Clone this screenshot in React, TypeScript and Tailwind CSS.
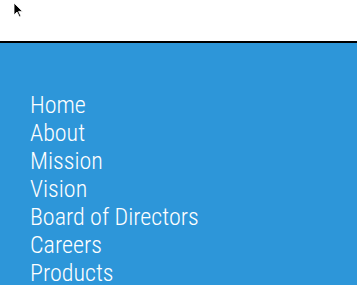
export default function App() {
  const links = ["Home", "About", "Mission", "Vision", "Board of Directors", "Careers", "Products"];
  return (
    <div className="h-[285px] w-[357px] overflow-hidden bg-white font-['Roboto',sans-serif]">
      <header className="relative h-[43px] border-b-2 border-black bg-white">
        <svg className="absolute left-[13px] top-[2px]" width="10" height="16" viewBox="0 0 10 16">
          <path d="M1 1 L1 13 L4 10 L6.5 15 L8 14.3 L5.6 9.4 L9.5 9.4 Z" fill="black" stroke="white" strokeWidth="0.8" />
        </svg>
      </header>
      <nav className="bg-[#2d96d9] pl-[30px] pt-[48px] pb-10">
        <ul className="flex flex-col">
          {links.map((l) => (
            <li key={l} className="font-stretch-condensed text-[24px] font-light leading-[28px] text-white">
              {l}
            </li>
          ))}
        </ul>
      </nav>
    </div>
  );
}
